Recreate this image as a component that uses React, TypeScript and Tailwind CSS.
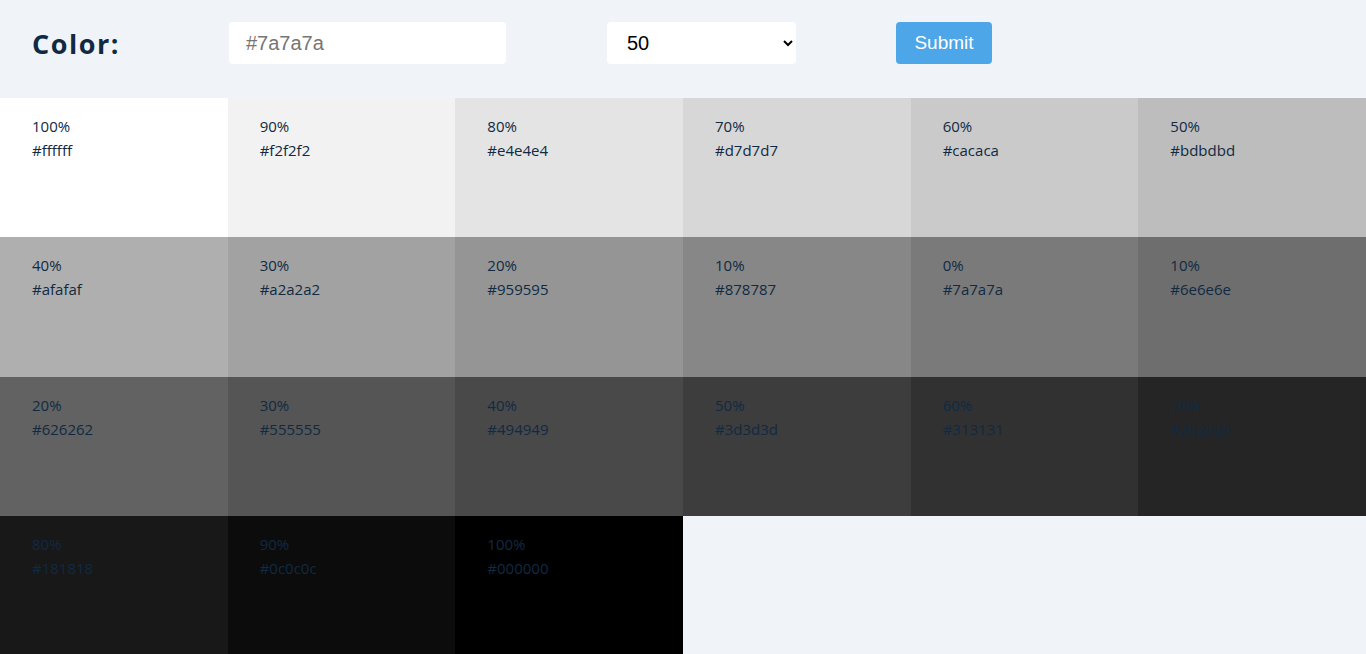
import React from "react";

const cells: [string, string][] = [
  ["100%", "#ffffff"],
  ["90%", "#f2f2f2"],
  ["80%", "#e4e4e4"],
  ["70%", "#d7d7d7"],
  ["60%", "#cacaca"],
  ["50%", "#bdbdbd"],
  ["40%", "#afafaf"],
  ["30%", "#a2a2a2"],
  ["20%", "#959595"],
  ["10%", "#878787"],
  ["0%", "#7a7a7a"],
  ["10%", "#6e6e6e"],
  ["20%", "#626262"],
  ["30%", "#555555"],
  ["40%", "#494949"],
  ["50%", "#3d3d3d"],
  ["60%", "#313131"],
  ["70%", "#252525"],
  ["80%", "#181818"],
  ["90%", "#0c0c0c"],
  ["100%", "#000000"],
];

export default function App() {
  return (
    <div className="min-h-[654px] w-[1366px] bg-[#f0f4f8] font-['Open_Sans','Noto_Sans',sans-serif] text-[#102a43]">
      <div className="flex h-[98px] items-start pl-[32px] pt-[22px]">
        <div className="w-[197px] text-[27px] font-bold leading-[44px] tracking-[1.5px]">Color:</div>
        <input
          className="h-[42px] w-[277px] rounded-[4px] bg-white pl-[17px] font-['Liberation_Sans',Arial,sans-serif] text-[20px] text-[#333] outline-none placeholder:text-[#757575]"
          placeholder="#7a7a7a"
        />
        <select
          className="ml-[101px] h-[42px] w-[189px] rounded-[4px] bg-white pl-[16px] pr-[2px] font-['Liberation_Sans',Arial,sans-serif] text-[20px] text-black outline-none"
          defaultValue="50"
        >
          <option value="10">10</option>
          <option value="20">20</option>
          <option value="50">50</option>
        </select>
        <button className="ml-[100px] h-[42px] w-[96px] rounded-[4px] bg-[#4ca6e8] font-['Liberation_Sans',Arial,sans-serif] text-[19px] text-white">
          Submit
        </button>
      </div>
      <div className="grid grid-cols-6 auto-rows-[139.33px]">
        {cells.map(([p, h], i) => (
          <div
            key={i}
            className="px-[32px] pt-[16px] text-[15px] leading-[24px]"
            style={{ backgroundColor: h }}
          >
            <div>{p}</div>
            <div>{h}</div>
          </div>
        ))}
      </div>
    </div>
  );
}
